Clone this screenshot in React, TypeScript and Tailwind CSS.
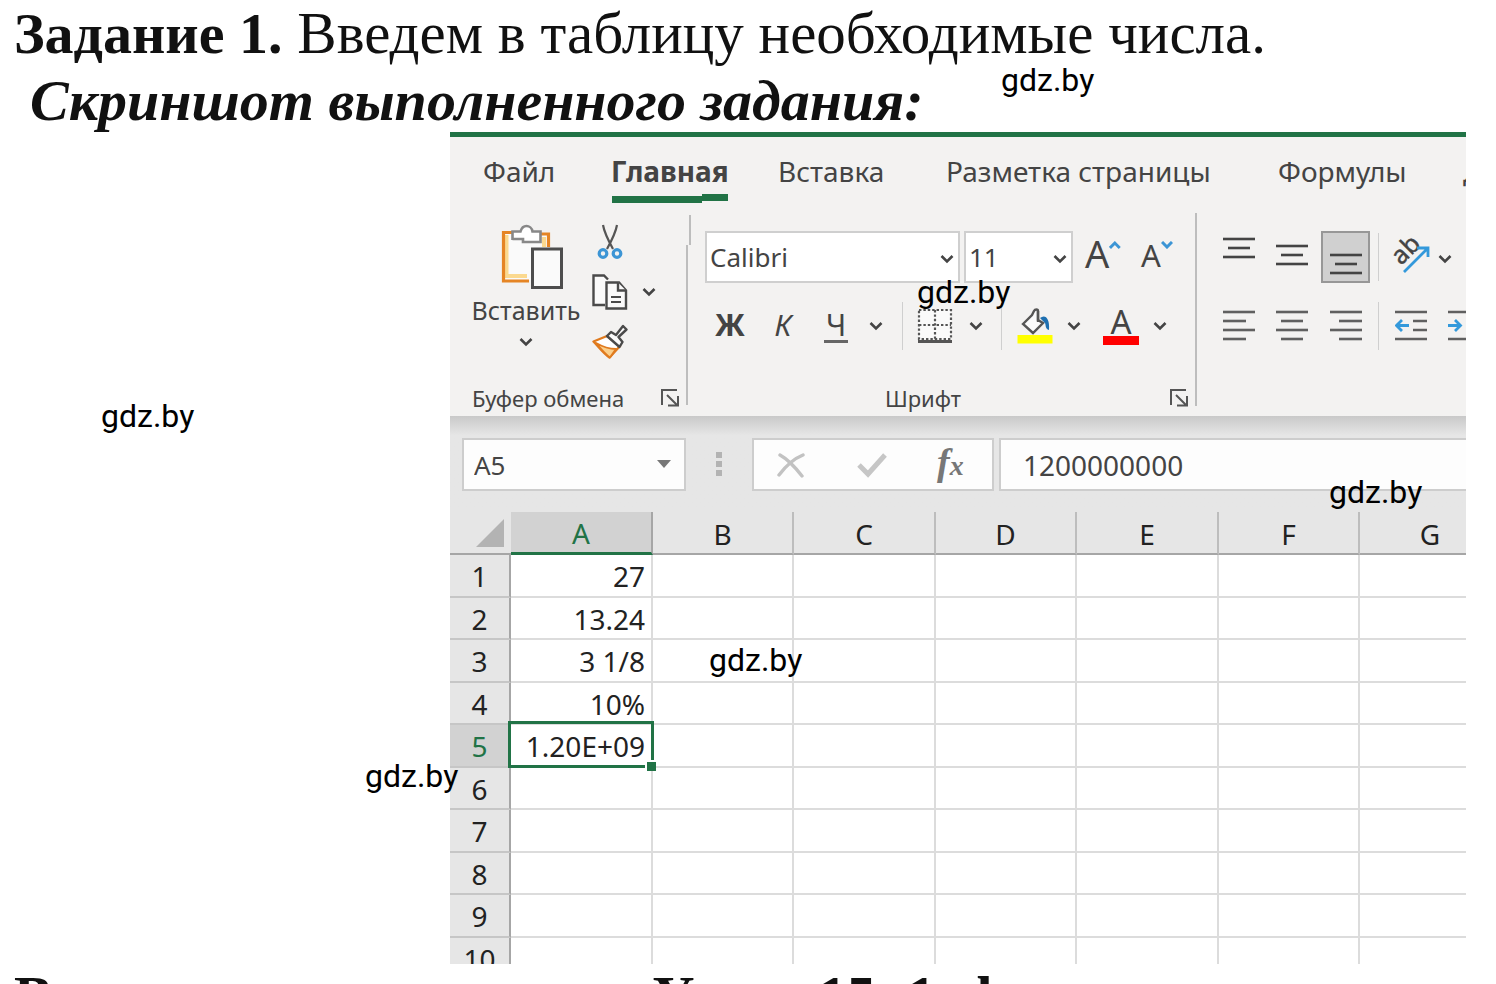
import type { ReactNode } from "react";

const TABS = ["Файл", "Главная", "Вставка", "Разметка страницы", "Формулы", "Данные"];

const COLUMNS = [
  { name: "A", width: "w-[142px]" },
  { name: "B", width: "w-[141px]" },
  { name: "C", width: "w-[142px]" },
  { name: "D", width: "w-[141px]" },
  { name: "E", width: "w-[142px]" },
  { name: "F", width: "w-[141px]" },
  { name: "G", width: "w-[142px]" },
];

const ROWS = ["27", "13.24", "3 1/8", "10%", "1.20E+09", "", "", "", "", ""];

const WATERMARKS = [
  "left-[1001px] top-[64px]",
  "left-[917px] top-[276px]",
  "left-[101px] top-[400px]",
  "left-[1329px] top-[476px]",
  "left-[709px] top-[644px]",
  "left-[365px] top-[760px]",
];

function Chevron({ className = "" }: { className?: string }) {
  return (
    <svg viewBox="0 0 14 10" className={`h-[10px] w-[14px] shrink-0 ${className}`} fill="none" stroke="#444" strokeWidth="2.6">
      <path d="M1.5 2 7 7.5 12.5 2" />
    </svg>
  );
}

function Divider({ className = "" }: { className?: string }) {
  return <span className={`h-12 w-px shrink-0 bg-[#cfcfcf] ${className}`} />;
}

function Tool({ label, className = "w-12", children }: { label: string; className?: string; children?: ReactNode }) {
  return (
    <button type="button" aria-label={label} className={`flex h-[52px] shrink-0 items-center justify-center ${className}`}>
      {children}
    </button>
  );
}

// each entry is [x1, x2, y]
function Lines({ lines, color = "#444" }: { lines: number[][]; color?: string }) {
  return (
    <svg viewBox="0 0 32 52" className="h-[52px] w-8" stroke={color} strokeWidth="2.6">
      {lines.map(([a, b, y]) => (
        <line key={y} x1={a} x2={b} y1={y} y2={y} />
      ))}
    </svg>
  );
}

function Launcher() {
  return (
    <button type="button" aria-label="Параметры" className="shrink-0">
      <svg viewBox="0 0 20 20" className="size-5" fill="none" stroke="#555" strokeWidth="2">
        <path d="M2 17V2h15M7 7l10 10M18 8v9.500H8" />
      </svg>
    </button>
  );
}

function PasteIcon() {
  return (
    <svg viewBox="0 0 64 68" className="ml-3 h-[68px] w-16" fill="none">
      <path d="M4 11h44v14H31v32H4z" fill="#fafafa" />
      <path d="M6.500 12v43M44 14v10" stroke="#fbd98f" strokeWidth="4" />
      <path d="M7 53h20" stroke="#fbd98f" strokeWidth="4" />
      <path d="M14 9.500H3.500v48.500H29M39 11h9.500v13" stroke="#e58525" strokeWidth="3.200" />
      <path d="M12.500 17V8.500h8C21.500 5 24 3 26.500 3s5.500 2 6 5.500h8V19H23v-3H12.500z" fill="#fff" stroke="#888" strokeWidth="2.600" />
      <path d="M32.500 26h29v38.500h-29z" fill="#fafafa" stroke="#4d4d4d" strokeWidth="3" />
    </svg>
  );
}

function ScissorsIcon() {
  return (
    <svg viewBox="0 0 26 36" className="h-9 w-[26px]" fill="none">
      <path d="M6 1c1 6 4 13 10 24M20 1c-1 6-4 13-10 24" stroke="#555" strokeWidth="2.200" />
      <circle cx="6" cy="29.500" r="3.800" stroke="#3c95d5" strokeWidth="3.200" />
      <circle cx="20" cy="29.500" r="3.800" stroke="#3c95d5" strokeWidth="3.200" />
    </svg>
  );
}

function CopyIcon() {
  return (
    <svg viewBox="0 0 36 36" className="size-9" fill="#fafafa" stroke="#4a4a4a" strokeWidth="2.400">
      <path d="M13 31H1.500V1.500H12l4 4" />
      <path d="M14.500 8.500H27l7 8V34.500H14.500z" />
      <path d="M26 8.500v8h8" />
      <path d="M19 23h10M19 28h10" strokeWidth="2" />
    </svg>
  );
}

function BrushIcon() {
  return (
    <svg viewBox="0 0 36 36" className="size-9" fill="none" strokeLinejoin="round">
      <path d="M15 12 1.500 17.500c4 4 10 12 16 16L28 22z" fill="#fff" stroke="#e07b1f" strokeWidth="2.400" />
      <path d="M4 19c7 4 13 6 20 6l-6 8.500C13 30 8 24 4 19z" fill="#fbcf8a" stroke="#e07b1f" strokeWidth="2" />
      <path d="m15 12 4-4 5 3 7-9 3.500 3.500-8 7.500 4 5-3 5z" fill="#fafafa" stroke="#4a4a4a" strokeWidth="2.400" />
    </svg>
  );
}

function BordersIcon() {
  return (
    <svg viewBox="0 0 36 36" className="size-9" fill="none" stroke="#555" strokeWidth="2.200">
      <path d="M2 2h32v29H2zM18 2v29M2 17h32" fill="#fafafa" strokeDasharray="2.400 2" />
      <path d="M1 33.500h34" strokeWidth="3" />
    </svg>
  );
}

function FillIcon() {
  return (
    <svg viewBox="0 0 36 36" className="size-9" fill="none">
      <path d="M6 16 15 7l2-4c1-2 4-2 4 0v9l5 3-10 10z" fill="#fafafa" stroke="#555" strokeWidth="2.400" />
      <path d="M21 3v11" stroke="#555" strokeWidth="2.400" />
      <path d="M23 10c5-4 10 0 9 12-4-1-3-5-4-7z" fill="#1e6fb0" />
      <path d="M.5 27h35v8.500H.5z" fill="#ff0" />
    </svg>
  );
}

function Clipboard() {
  return (
    <section className="relative flex w-[240px] shrink-0 flex-col pl-[22px]">
      <div className="flex h-[177px]">
        <button type="button" className="flex w-[108px] flex-col items-center pt-5">
          <PasteIcon />
          <span className="text-[25px] leading-[38px]">Вставить</span>
          <Chevron className="mt-2" />
        </button>
        <div className="flex w-[90px] flex-col gap-[14px] pl-3 pt-[21px]">
          <button type="button" aria-label="Вырезать" className="pl-[5px]">
            <ScissorsIcon />
          </button>
          <button type="button" aria-label="Копировать" className="flex items-center gap-[14px]">
            <CopyIcon />
            <Chevron />
          </button>
          <button type="button" aria-label="Формат по образцу">
            <BrushIcon />
          </button>
        </div>
      </div>
      <div className="flex h-9 items-center justify-between pr-[10px]">
        <span className="text-[22px]">Буфер обмена</span>
        <Launcher />
      </div>
      <span className="absolute right-[2px] top-[42px] h-[160px] w-[2px] bg-[#bdbdbd]" />
      <span className="absolute -right-px top-3 h-[30px] w-[2px] bg-[#bdbdbd]" />
    </section>
  );
}

function FontGroup() {
  return (
    <section className="relative flex w-[507px] shrink-0 flex-col pl-[15px]">
      <div className="flex h-[177px] flex-col gap-[17px] pt-7">
        <div className="flex h-[52px]">
          <div className="relative mr-1 w-[255px]">
            <select aria-label="Шрифт" className="h-full w-full appearance-none border-2 border-[#cfcfcf] bg-white pl-[3px] text-[26px]">
              <option>Calibri</option>
            </select>
            <Chevron className="pointer-events-none absolute right-[6px] top-[23px]" />
          </div>
          <div className="relative w-[109px]">
            <select aria-label="Размер шрифта" className="h-full w-full appearance-none border-2 border-[#cfcfcf] bg-white pl-[3px] text-[26px]">
              <option>11</option>
            </select>
            <Chevron className="pointer-events-none absolute right-[6px] top-[23px]" />
          </div>
          <Tool label="Увеличить размер шрифта" className="ml-3 w-[36px] pb-2">
            <span className="text-[38px] leading-[44px]">A</span>
            <svg viewBox="0 0 12 8" className="mb-4 h-2 w-3" fill="none" stroke="#3c95d5" strokeWidth="3">
              <path d="m1 7 5-5 5 5" />
            </svg>
          </Tool>
          <Tool label="Уменьшить размер шрифта" className="ml-5 w-[32px] pb-1">
            <span className="text-[31px] leading-[40px]">A</span>
            <svg viewBox="0 0 12 8" className="mb-5 h-2 w-3" fill="none" stroke="#3c95d5" strokeWidth="3">
              <path d="m1 1 5 5 5-5" />
            </svg>
          </Tool>
        </div>
        <div className="flex h-[52px] items-center">
          <Tool label="Полужирный" className="w-[50px] pb-1">
            <span className="text-[30px] font-bold">Ж</span>
          </Tool>
          <Tool label="Курсив" className="w-14 pb-1">
            <span className="text-[30px] italic">К</span>
          </Tool>
          <Tool label="Подчеркнутый" className="w-[50px]">
            <span className="border-b-[3px] border-[#666] px-[2px] text-[30px] leading-[31px]">Ч</span>
          </Tool>
          <Tool label="Виды подчеркивания" className="w-[30px]">
            <Chevron />
          </Tool>
          <Divider className="mx-[11px]" />
          <Tool label="Границы" className="w-[42px]">
            <BordersIcon />
          </Tool>
          <Tool label="Виды границ" className="w-10">
            <Chevron />
          </Tool>
          <Divider className="mx-[5px]" />
          <Tool label="Цвет заливки" className="w-14">
            <FillIcon />
          </Tool>
          <Tool label="Цвета заливки" className="w-[22px]">
            <Chevron />
          </Tool>
          <Tool label="Цвет текста" className="ml-3 w-12">
            <span className="w-9 border-b-[9px] border-[#f00] text-[33px] leading-[28px]">A</span>
          </Tool>
          <Tool label="Цвета текста" className="w-[30px]">
            <Chevron />
          </Tool>
        </div>
      </div>
      <div className="flex h-9 items-center pr-2">
        <span className="flex-1 pr-7 text-center text-[22px]">Шрифт</span>
        <Launcher />
      </div>
      <span className="absolute right-0 top-[10px] h-[193px] w-[2px] bg-[#bdbdbd]" />
    </section>
  );
}

function AlignGroup() {
  return (
    <section className="flex flex-col gap-[17px] pl-[18px] pt-7">
      <div className="flex h-[52px] items-center gap-[5px]">
        <Tool label="По верхнему краю">
          <Lines lines={[[0, 32, 8], [5, 27, 17], [0, 32, 26]]} />
        </Tool>
        <Tool label="По середине">
          <Lines lines={[[0, 32, 15], [5, 27, 24], [0, 32, 33]]} />
        </Tool>
        <Tool label="По нижнему краю" className="w-[49px] border-2 border-[#979797] bg-[#d0d0d0]">
          <Lines lines={[[0, 32, 24], [5, 27, 33], [0, 32, 42]]} />
        </Tool>
        <Divider className="ml-[3px] mr-[3px]" />
        <Tool label="Ориентация" className="w-[46px]">
          <svg viewBox="0 0 40 44" className="h-11 w-10" fill="none">
            <text x="11" y="31" transform="rotate(-45 11 31)" fontSize="25" fill="#444" stroke="#444" strokeWidth="0.500">
              ab
            </text>
            <path d="m14 37 23-23M27 13h11v9" stroke="#3399db" strokeWidth="2.800" />
          </svg>
        </Tool>
        <Chevron className="mt-1" />
      </div>
      <div className="flex h-[52px] items-center gap-[5px]">
        <Tool label="По левому краю">
          <Lines color="#606060" lines={[[0, 32, 12], [0, 23, 21], [0, 32, 30], [0, 23, 39]]} />
        </Tool>
        <Tool label="По центру">
          <Lines color="#606060" lines={[[0, 32, 12], [5, 27, 21], [0, 32, 30], [5, 27, 39]]} />
        </Tool>
        <Tool label="По правому краю" className="w-[49px]">
          <Lines color="#606060" lines={[[0, 32, 12], [9, 32, 21], [0, 32, 30], [9, 32, 39]]} />
        </Tool>
        <Divider className="ml-[3px] mr-[3px]" />
        <Tool label="Уменьшить отступ">
          <svg viewBox="0 0 32 52" className="h-[52px] w-8" fill="none" stroke="#606060" strokeWidth="2.600">
            <path d="M0 12h32M18 21h14M18 30h14M0 39h32" />
            <path d="M14 25.500H2M7 20l-5.500 5.500L7 31" stroke="#3399db" strokeWidth="2.800" />
          </svg>
        </Tool>
        <Tool label="Увеличить отступ">
          <svg viewBox="0 0 32 52" className="h-[52px] w-8" fill="none" stroke="#606060" strokeWidth="2.600">
            <path d="M0 12h32M18 21h14M18 30h14M0 39h32" />
            <path d="M0 25.500h12M7 20l5.500 5.500L7 31" stroke="#3399db" strokeWidth="2.800" />
          </svg>
        </Tool>
      </div>
    </section>
  );
}

function Ribbon() {
  return (
    <div className="border-t-[5px] border-[#217346] bg-[#f3f2f1] text-[#444]">
      <nav className="grid h-[66px] grid-cols-[128px_167px_168px_332px_185px_100px] pl-[33px]">
        {TABS.map((tab) => (
          <button key={tab} type="button" className="flex items-start whitespace-nowrap pt-[14px] text-left text-[28px] leading-[40px]">
            {tab === "Главная" ? (
              <span className="relative font-bold">
                {tab}
                <span className="absolute left-px top-[45px] h-[7px] w-[90px] bg-[#217346]" />
                <span className="absolute left-[91px] top-[43px] h-[7px] w-[26px] bg-[#217346]" />
              </span>
            ) : (
              tab
            )}
          </button>
        ))}
      </nav>
      <div className="flex h-[213px]">
        <Clipboard />
        <FontGroup />
        <AlignGroup />
      </div>
    </div>
  );
}

function FormulaBar() {
  return (
    <div className="flex h-24 items-start bg-[#e6e6e6] bg-linear-to-b from-[#c9c9c9] to-[#e6e6e6] to-20% pl-3 pt-[22px]">
      <div className="relative w-[224px] shrink-0">
        <input
          aria-label="Имя"
          defaultValue="A5"
          className="h-[53px] w-full border-2 border-[#cdcdcd] bg-[#fdfdfd] pl-[10px] text-[26px] text-[#444]"
        />
        <svg viewBox="0 0 14 8" className="pointer-events-none absolute right-[15px] top-[22px] h-2 w-[14px]" fill="#777">
          <path d="M0 0h14L7 8z" />
        </svg>
      </div>
      <svg viewBox="0 0 6 24" className="ml-[30px] mt-[14px] h-6 w-[6px] shrink-0" fill="#b3b3b3">
        <path d="M0 0h6v6H0zM0 9h6v6H0zM0 18h6v6H0z" />
      </svg>
      <div className="ml-[30px] flex h-[53px] w-[242px] shrink-0 items-center border-2 border-[#cdcdcd] bg-[#fdfdfd] pl-[23px]">
        <button type="button" aria-label="Отмена">
          <svg viewBox="0 0 28 26" className="h-[26px] w-7" fill="none" stroke="#c2c2c2" strokeLinecap="round">
            <path d="M3 3c9 5 15 12 22 21" strokeWidth="3.400" />
            <path d="M26 3C16 7 8 15 2 23" strokeWidth="3.400" />
          </svg>
        </button>
        <button type="button" aria-label="Ввод" className="ml-[52px]">
          <svg viewBox="0 0 30 26" className="h-[26px] w-[30px]" fill="none" stroke="#c6c6c6" strokeWidth="5">
            <path d="m2 13 9 9L28 3" />
          </svg>
        </button>
        <button type="button" aria-label="Вставить функцию" className="ml-[50px] font-['Liberation_Serif',serif] font-bold italic text-[#777]">
          <span className="text-[38px] leading-[40px]">f</span>
          <span className="text-[28px]">x</span>
        </button>
      </div>
      <input
        aria-label="Строка формул"
        defaultValue="1200000000"
        className="ml-[5px] h-[53px] min-w-0 flex-1 border-2 border-r-0 border-[#cdcdcd] bg-[#fdfdfd] pl-[22px] text-[28px] text-[#444]"
      />
    </div>
  );
}

function Sheet() {
  return (
    <table className="w-[1052px] table-fixed border-separate border-spacing-0 text-[28px] leading-[34px] text-[#222]">
      <thead>
        <tr className="h-[43px] bg-[#e6e6e6]">
          <th className="w-[61px] border-b-2 border-[#a6a6a6] p-0" aria-label="Выделить все">
            <svg viewBox="0 0 28 28" className="ml-[26px] size-7" fill="#b3b3b3">
              <path d="M28 0v28H0z" />
            </svg>
          </th>
          {COLUMNS.map((col) => (
            <th
              key={col.name}
              scope="col"
              className={`${col.width} border-r-2 p-0 pt-[2px] font-normal ${
                col.name === "A" ? "border-b-[3px] border-b-[#217346] border-r-[#a6a6a6] bg-[#d2d2d2] text-[#217346]" : "border-b-2 border-b-[#a6a6a6] border-r-[#bdbdbd]"
              }`}
            >
              {col.name}
            </th>
          ))}
        </tr>
      </thead>
      <tbody>
        {ROWS.map((value, i) => {
          const active = i === 4;
          return (
            <tr key={i} className="h-[42px] odd:h-[43px]">
              <th
                scope="row"
                className={`border-b-2 border-r-2 border-b-[#c6c6c6] border-r-[#a6a6a6] p-0 pt-px font-normal ${
                  active ? "bg-[#d2d2d2] text-[#217346]" : "bg-[#e6e6e6]"
                }`}
              >
                {i + 1}
              </th>
              {COLUMNS.map((col) => {
                const selected = active && col.name === "A";
                return (
                  <td
                    key={col.name}
                    className={`border-b-2 border-r-2 border-[#dcdcdc] bg-white p-0 pr-[6px] pt-px text-right ${selected ? "relative z-10" : ""}`}
                  >
                    {col.name === "A" && value}
                    {selected && (
                      <>
                        <span className="absolute -bottom-[2px] -left-[3px] -right-[3px] -top-1 border-[3px] border-[#217346]" />
                        <span className="absolute -bottom-[5px] -right-[5px] size-[11px] border-l-2 border-t-2 border-white bg-[#217346]" />
                      </>
                    )}
                  </td>
                );
              })}
            </tr>
          );
        })}
      </tbody>
    </table>
  );
}

export default function App() {
  return (
    <div className="relative flex h-screen flex-col overflow-hidden bg-white font-['Noto_Sans',sans-serif]">
      <header className="h-[132px] shrink-0 whitespace-nowrap pl-[14px] font-['Liberation_Serif',serif] text-[58px] leading-[67px] text-[#111]">
        <h1>
          <b>Задание 1.</b>
          <span className="text-[59px]"> Введем в таблицу необходимые числа.</span>
        </h1>
        <h2 className="pl-4 font-bold italic">Скриншот выполненного задания:</h2>
      </header>

      <main className="ml-[450px] mr-[30px] min-h-0 flex-1 overflow-hidden">
        <Ribbon />
        <FormulaBar />
        <Sheet />
      </main>

      <footer className="grid h-5 shrink-0 grid-cols-[638px_166px_89px_53px_auto] overflow-hidden pl-[14px] pt-1 font-['Liberation_Serif',serif] text-[58px] font-bold leading-[58px] text-[#111]">
        <span>В</span>
        <span>У</span>
        <span>15</span>
        <span>1</span>
        <span>d</span>
      </footer>

      {WATERMARKS.map((place) => (
        <span key={place} className={`pointer-events-none absolute z-20 font-['Roboto',sans-serif] text-[32px] leading-8 text-black ${place}`}>
          gdz.by
        </span>
      ))}
    </div>
  );
}
